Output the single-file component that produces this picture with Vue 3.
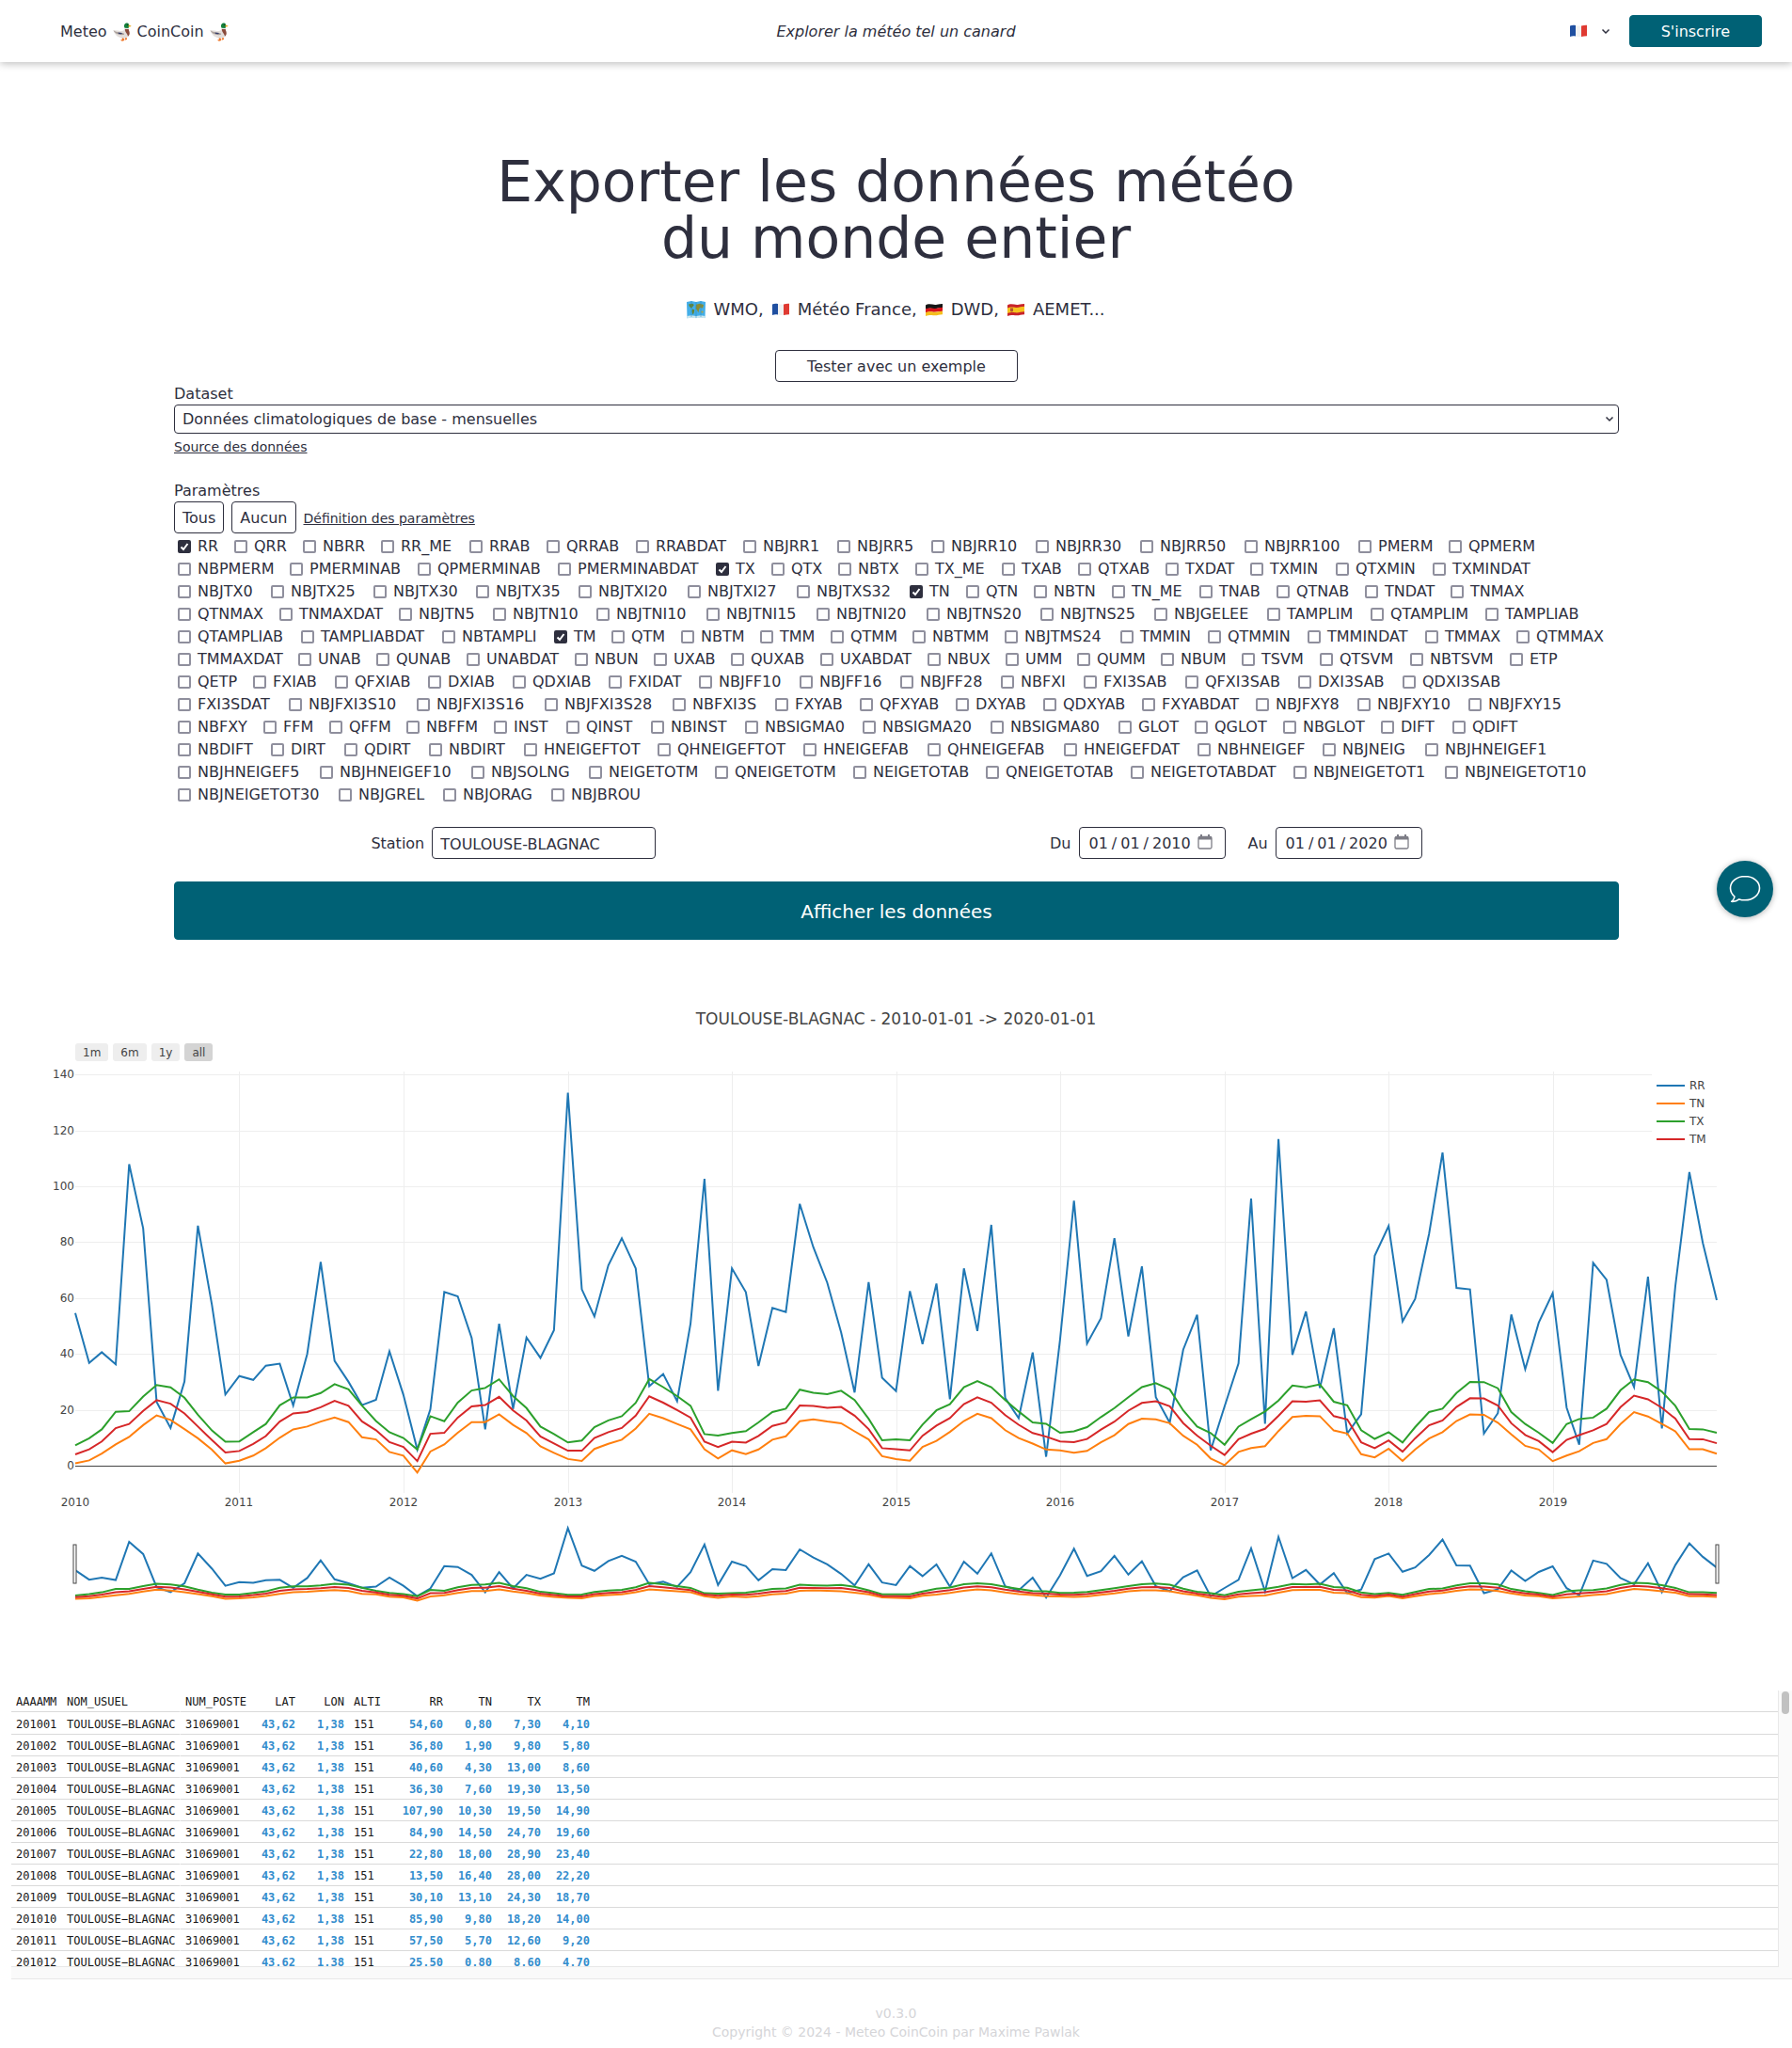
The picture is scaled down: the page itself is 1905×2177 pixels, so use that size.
<script setup>
import { ref, computed } from 'vue'

const PARAM_NAMES = `RR QRR NBRR RR_ME RRAB QRRAB RRABDAT NBJRR1 NBJRR5 NBJRR10 NBJRR30 NBJRR50 NBJRR100 PMERM QPMERM
NBPMERM PMERMINAB QPMERMINAB PMERMINABDAT TX QTX NBTX TX_ME TXAB QTXAB TXDAT TXMIN QTXMIN TXMINDAT
NBJTX0 NBJTX25 NBJTX30 NBJTX35 NBJTXI20 NBJTXI27 NBJTXS32 TN QTN NBTN TN_ME TNAB QTNAB TNDAT TNMAX
QTNMAX TNMAXDAT NBJTN5 NBJTN10 NBJTNI10 NBJTNI15 NBJTNI20 NBJTNS20 NBJTNS25 NBJGELEE TAMPLIM QTAMPLIM TAMPLIAB
QTAMPLIAB TAMPLIABDAT NBTAMPLI TM QTM NBTM TMM QTMM NBTMM NBJTMS24 TMMIN QTMMIN TMMINDAT TMMAX QTMMAX
TMMAXDAT UNAB QUNAB UNABDAT NBUN UXAB QUXAB UXABDAT NBUX UMM QUMM NBUM TSVM QTSVM NBTSVM ETP
QETP FXIAB QFXIAB DXIAB QDXIAB FXIDAT NBJFF10 NBJFF16 NBJFF28 NBFXI FXI3SAB QFXI3SAB DXI3SAB QDXI3SAB
FXI3SDAT NBJFXI3S10 NBJFXI3S16 NBJFXI3S28 NBFXI3S FXYAB QFXYAB DXYAB QDXYAB FXYABDAT NBJFXY8 NBJFXY10 NBJFXY15
NBFXY FFM QFFM NBFFM INST QINST NBINST NBSIGMA0 NBSIGMA20 NBSIGMA80 GLOT QGLOT NBGLOT DIFT QDIFT
NBDIFT DIRT QDIRT NBDIRT HNEIGEFTOT QHNEIGEFTOT HNEIGEFAB QHNEIGEFAB HNEIGEFDAT NBHNEIGEF NBJNEIG NBJHNEIGEF1
NBJHNEIGEF5 NBJHNEIGEF10 NBJSOLNG NEIGETOTM QNEIGETOTM NEIGETOTAB QNEIGETOTAB NEIGETOTABDAT NBJNEIGETOT1 NBJNEIGETOT10
NBJNEIGETOT30 NBJGREL NBJORAG NBJBROU`.split(/\s+/)

// Advance of each capital in thousandths of an em, used to reserve the label widths
const ADVANCE = {
  A: 684, B: 686, C: 698, D: 771, E: 632, F: 575, G: 775, H: 751, I: 421, J: 455, K: 693, L: 557, M: 843,
  N: 748, O: 787, P: 603, Q: 787, R: 695, S: 684, T: 616, U: 732, V: 684, W: 989, X: 685, Y: 615, Z: 685
}
const KERNING = { TA: -85, AT: -85, TO: -20, OT: -20 }
const labelWidth = (name) => {
  const em = [...name].reduce(
    (sum, c, i) => sum + (ADVANCE[c] || 636) + (KERNING[name.slice(i, i + 2)] || 0), 0)
  return Math.round(em * 16 / 1000 - 0.2)
}

const params = PARAM_NAMES.map((name) => ({ name, width: labelWidth(name) }))
const selected = ref(['RR', 'TX', 'TN', 'TM'])
const selectAll = () => { selected.value = [...PARAM_NAMES] }
const selectNone = () => { selected.value = [] }

const dataset = ref('mensuelles')
const language = ref('fr')
const station = ref('TOULOUSE-BLAGNAC')
const from = ref('2010-01-01')
const to = ref('2020-01-01')

// Monthly series, 2010-01 to 2020-01
const RR = [
  54.6, 36.8, 40.6, 36.3, 107.9, 84.9, 22.8, 13.5, 30.1, 85.9, 57.5, 25.5,
  32.1, 30.7, 35.8, 36.5, 21.5, 40, 72.9, 37.5, 30, 21.7, 23.6, 40.9,
  25.4, 5.8, 20.2, 62.2, 60.6, 45.7, 13, 50.8, 20.3, 45.9, 38.6, 48.5,
  133.5, 63.1, 53.4, 71.7, 81.4, 70.6, 28.5, 32.8, 23.1, 50.9, 102.7, 26.8,
  70.6, 62.1, 35.7, 56.5, 55, 93.7, 78.2, 65.5, 47.6, 26.2, 65.7, 31.5,
  26.7, 62.5, 43.5, 65.2, 23.8, 70.6, 48.2, 86.2, 24.2, 17, 40.5, 3.2,
  45.1, 94.8, 43.7, 52.8, 81.4, 46.3, 71.3, 24.5, 15.4, 41.5, 54, 5.5,
  21.2, 36.6, 95.6, 15, 116.9, 39.7, 55.2, 27.8, 49.2, 11.5, 18.4, 75.2,
  85.8, 51.6, 59.7, 83, 112.1, 63.6, 63.1, 11.5, 18.8, 54.1, 34.5, 51.2,
  61.8, 20.8, 7.5, 72.6, 66.5, 39.7, 28.1, 67.6, 13.3, 64.3, 105.1, 79.7,
  59.3
]
const TX = [
  7.3, 9.8, 13, 19.3, 19.5, 24.7, 28.9, 28, 24.3, 18.2, 12.6, 8.6,
  8.7, 12, 14.9, 21.6, 24.4, 24.4, 26, 29.2, 27.3, 21.5, 16, 12,
  9.9, 5.8, 17.7, 15.9, 22.6, 26.9, 27.8, 30.9, 24.9, 20.6, 14, 11.3,
  8.3, 9, 13.8, 16.2, 17.7, 22.5, 31, 28.1, 24.9, 21.4, 11.3, 10.8,
  11.7, 12.4, 15.5, 19.2, 20.4, 27.2, 26.1, 25.6, 26.8, 23.5, 16.8, 9.1,
  9.4, 9.1, 14.7, 19.8, 22, 28.1, 30.3, 28.1, 23.5, 19.4, 15.5, 15,
  11.8, 12.3, 13.8, 17.4, 20.6, 24.5, 28.1, 29.5, 27.3, 19.8, 14, 11.7,
  7.5, 14, 16.6, 19.4, 23.3, 28.7, 28, 29.1, 22.9, 21.6, 12.7, 9.6,
  12, 8.3, 13.8, 19.2, 20.4, 26, 30, 29.9, 27.7, 19.2, 14.9, 11.8,
  8.1, 14.9, 16.7, 17.2, 20.4, 27, 30.9, 29.9, 26.5, 21.4, 13.1, 13,
  11.8
]
const TN = [
  0.8, 1.9, 4.3, 7.6, 10.3, 14.5, 18, 16.4, 13.1, 9.8, 5.7, 0.8,
  1.8, 3.6, 6.3, 10, 13, 14, 15.8, 17.2, 15.6, 10.2, 9.4, 4.9,
  3.6, -2.5, 5.1, 7.6, 11.8, 15.6, 15.6, 18.4, 14.6, 11.7, 6.9, 4.6,
  2.4, 1.7, 6, 7.8, 9.3, 13.3, 18.6, 17, 14.9, 13, 5.9, 2.6,
  5.5, 4.1, 5.8, 9.3, 10.5, 15.9, 16.6, 15.8, 15.2, 12.3, 9.4, 3.4,
  2.4, 1.8, 6.7, 8.9, 12.1, 16, 18.6, 17, 12.7, 9.9, 7.9, 5.8,
  5.5, 4.6, 5.3, 8.4, 10.9, 14.9, 16.8, 16.6, 15.2, 10.7, 7.5, 2.6,
  0.2, 4.9, 6.3, 7, 12.4, 17.4, 17.8, 17.7, 12.6, 11.5, 4.1, 3,
  6.1, 1.7, 5.8, 9.7, 12, 16, 18.3, 18.2, 15.4, 11.2, 7.1, 5.8,
  1.6, 3.6, 5.2, 8.1, 9.5, 14.9, 19.2, 17.6, 14.9, 12.3, 5.9, 5.9,
  4.3
]
const TM = TN.map((v, i) => (v + TX[i]) / 2)

const series = [
  { name: 'RR', color: '#1f77b4', values: RR },
  { name: 'TN', color: '#ff7f0e', values: TN },
  { name: 'TX', color: '#2ca02c', values: TX },
  { name: 'TM', color: '#d62728', values: TM }
]

const START = Date.UTC(2010, 0, 1)
const END = Date.UTC(2020, 0, 1)
const xOf = (t) => 80 + (1745 * (t - START)) / (END - START)
const monthX = (i) => xOf(Date.UTC(2010, i, 1))
const yOf = (v) => 428 - v * 2.97
const miniY = (v) => 570 - v * 0.566
const points = (values, y) => values.map((v, i) => `${monthX(i).toFixed(1)},${y(v).toFixed(1)}`).join(' ')

const lines = computed(() => series.map((s) => ({ ...s, main: points(s.values, yOf), mini: points(s.values, miniY) })))
const years = Array.from({ length: 10 }, (_, i) => ({ year: 2010 + i, x: Math.round(xOf(Date.UTC(2010 + i, 0, 1))) }))
const yTicks = [0, 20, 40, 60, 80, 100, 120, 140].map((value) => ({ value, y: Math.round(yOf(value)) }))

const ranges = ['1m', '6m', '1y', 'all']
const range = ref('all')

const columns = [
  { name: 'AAAAMM' }, { name: 'NOM_USUEL' }, { name: 'NUM_POSTE' }, { name: 'LAT', num: true }, { name: 'LON', num: true },
  { name: 'ALTI' }, { name: 'RR', num: true }, { name: 'TN', num: true }, { name: 'TX', num: true }, { name: 'TM', num: true }
]
const meanTemps = [4.1, 5.8, 8.6, 13.5, 14.9, 19.6, 23.4, 22.2, 18.7, 14, 9.2, 4.7]
const fmt = (v) => v.toFixed(2).replace('.', ',')
const rows = meanTemps.map((tm, i) => [
  String(201001 + i), 'TOULOUSE−BLAGNAC', '31069001', '43,62', '1,38', '151', fmt(RR[i]), fmt(TN[i]), fmt(TX[i]), fmt(tm)
])
</script>

<template>
  <div class="page">
    <svg width="0" height="0" class="defs" aria-hidden="true">
      <symbol id="duck" viewBox="0 0 20 20">
        <path d="M9.500 15.500l.4 2.400-2 .9 2.100 1 2.200-.9-.9-3.400zM13 15.500l.2 1.900-1.200.7 1.600.5 1.500-.8-.8-2.300z" fill="#ee7424" />
        <path d="M.5 8.300C3 7.900 5.500 8.600 8 9c3 .3 4.600-.8 4.800-3.200l3.800.2c.1 2 1.200 3.400 1.100 5.600-.2 3-2.700 5-6.400 5C6.500 16.600 2 13.800.5 8.300z" fill="#e3dedb" />
        <path d="M12.800 6.700h3.900c.1 1.700 1.100 2.900 1 4.900-.1 1.500-.8 2.500-1.700 3.200-.2-3-3.200-4.300-3.200-8.100z" fill="#8a4a3b" />
        <path d="M.5 8.300c3 2 6 2.400 9.500 2.700 1.700.1 2.400.9 2 1.800-3 .9-9 .3-11.500-4.500z" fill="#a99f99" />
        <path d="M5.500 10.600l4.500.4-1 1.300-3-.4z" fill="#39406b" />
        <path d="M12.600 5.800l4.100.2v.8l-4.200-.2z" fill="#fff" />
        <path d="M12.600 5.700c-.7-1.200-.9-2.500-.3-3.700C12.900.7 14.100.2 15.300.5c1.400.3 2 1.300 1.900 2.600 0 1-.5 1.900-.6 2.800z" fill="#13803c" />
        <path d="M16.800 2.400c1 .4 2 .7 2.900 1.400-1 .7-2.100.7-3.200.4z" fill="#e8a81c" />
        <circle cx="15.400" cy="2.300" r=".5" fill="#111" />
      </symbol>
      <symbol id="flag-fr" viewBox="0 0 20 14">
        <path d="M1 1.500C3 .5 5 .5 7 1v11.500c-2-.4-4-.4-6 .6z" fill="#1f4fa0" />
        <path d="M7 1c2 .6 4 .8 6 .4v11.500c-2 .4-4 .1-6-.4z" fill="#f1f1f1" />
        <path d="M13 1.400c2-.3 4-.9 6-.6v11.500c-2 0-4 .3-6 .6z" fill="#df3a32" />
      </symbol>
      <symbol id="flag-de" viewBox="0 0 20 14">
        <path d="M1 2.500C5-.2 9 2.800 13 1.800c2-.4 4-.9 6-.9v4c-4 0-7 1.800-11 1-3-.5-5-.2-7 .8z" fill="#161616" />
        <path d="M1 6.500c3-1.500 5-1.200 8-.7 4 .7 6-1 10-1v4c-4 0-7 1.500-11 .8-3-.5-5 0-7 .8z" fill="#d8141a" />
        <path d="M1 10.300c3-1.300 5-1 8-.6 4 .5 6-1 10-1v3.500c-4 0-6 1.700-10 1-3-.5-5-.2-8 .8z" fill="#f5bf1e" />
      </symbol>
      <symbol id="flag-es" viewBox="0 0 20 14">
        <path d="M1 2.500C5-.2 9 2.800 13 1.800c2-.4 4-.9 6-.9v11.300c-4 0-6 1.700-10 1-3-.5-5-.2-8 .8z" fill="#c8232a" />
        <path d="M1 5.500c3-1.500 5-1.200 8-.7 4 .7 6-1 10-1v5.500c-4 0-6 1.600-10 1-3-.5-5-.2-8 .8z" fill="#f6c21d" />
        <path d="M4 5.500h3v3.300q-1.500 1.200-3 0z" fill="#b4552c" />
      </symbol>
      <symbol id="world-map" viewBox="0 0 20 19">
        <path d="M0 1l5-1 5 1 5-1 5 1-.5 17-4.500-.8-5 .9-5-.8-4.500.9z" fill="#43aee8" />
        <path d="M.2 16l4.800-.8 5 .8 5-.8 4.700.8-.2 2.200-4.500-.8-5 .9-5-.8-4.500.9z" fill="#cfe8ee" />
        <path d="M2 3.500l4-.7 1.800 1.200L6 6.500 5 7.800 3 6zM6 8.500l2.300 1L7.500 13l-1 1.500L5.500 11z" fill="#65842f" />
        <path d="M10 3.800l4-1 4 1.200-1 3.500-3-.5-1 2.500-.6 3-1.400-3L9.600 8z" fill="#8c8c32" />
        <path d="M15.500 10.500l2.200.2-.5 2-2-.4z" fill="#b1a340" />
        <path d="M5 0v17M10 1v17M15 0v17" stroke="#2b87bd" stroke-width=".5" fill="none" />
      </symbol>
    </svg>

    <header class="topbar">
      <a class="brand" href="#">Meteo
        <svg class="duck"><use href="#duck" /></svg>
        CoinCoin
        <svg class="duck"><use href="#duck" /></svg>
      </a>
      <em class="tagline">Explorer la météo tel un canard</em>
      <div class="actions">
        <div class="lang">
          <svg class="flag"><use href="#flag-fr" /></svg>
          <select v-model="language" class="chevron" aria-label="Langue"><option value="fr"></option></select>
        </div>
        <button class="btn primary">S'inscrire</button>
      </div>
    </header>

    <main>
      <h1>Exporter les données météo<br>du monde entier</h1>
      <p class="sources">
        <svg class="map"><use href="#world-map" /></svg> WMO,
        <svg class="flag"><use href="#flag-fr" /></svg> Météo France,
        <svg class="flag"><use href="#flag-de" /></svg> DWD,
        <svg class="flag"><use href="#flag-es" /></svg> AEMET...
      </p>

      <form class="form" @submit.prevent>
        <button type="button" class="btn example">Tester avec un exemple</button>
        <label for="dataset" class="caption">Dataset</label>
        <select id="dataset" v-model="dataset" class="field chevron">
          <option value="mensuelles">Données climatologiques de base - mensuelles</option>
        </select>
        <div class="source-link"><a href="#">Source des données</a></div>

        <span id="params-title" class="caption">Paramètres</span>
        <div class="tools">
          <button type="button" class="btn small" @click="selectAll">Tous</button>
          <button type="button" class="btn small" @click="selectNone">Aucun</button>
          <a href="#">Définition des paramètres</a>
        </div>
        <div class="params" role="group" aria-labelledby="params-title">
          <label v-for="p in params" :key="p.name" class="param">
            <input v-model="selected" type="checkbox" :value="p.name">
            <span :style="{ width: p.width + 'px' }">{{ p.name }}</span>
          </label>
        </div>

        <div class="filters">
          <div class="group">
            <label for="station">Station</label>
            <input id="station" v-model="station" class="field station" type="text">
          </div>
          <div class="group">
            <label for="from">Du</label>
            <input id="from" v-model="from" class="field date" type="date">
            <label for="to" class="until">Au</label>
            <input id="to" v-model="to" class="field date" type="date">
          </div>
        </div>
        <button type="submit" class="btn primary submit">Afficher les données</button>
      </form>

      <section class="chart">
        <h2>TOULOUSE-BLAGNAC - 2010-01-01 -&gt; 2020-01-01</h2>
        <div class="ranges">
          <button v-for="r in ranges" :key="r" :class="{ active: r === range }" @click="range = r">{{ r }}</button>
        </div>
        <svg class="plot" viewBox="0 0 1905 667" role="img" aria-label="RR, TN, TX, TM">
          <g class="grid">
            <line v-for="t in yTicks.slice(1)" :key="t.value" x1="80" x2="1825" :y1="t.y" :y2="t.y" />
            <line v-for="t in years.slice(1)" :key="t.year" :x1="t.x" :x2="t.x" y1="9" y2="457" />
          </g>
          <line class="zero" x1="80" x2="1825" y1="428" y2="428" />
          <g class="ticks">
            <text v-for="t in yTicks" :key="t.value" x="79" :y="t.y + 4" text-anchor="end">{{ t.value }}</text>
            <text v-for="t in years" :key="t.year" :x="t.x" y="471" text-anchor="middle">{{ t.year }}</text>
          </g>
          <polyline v-for="s in lines" :key="s.name" class="line" :points="s.main" :stroke="s.color" />
          <rect x="1756" y="10" width="69" height="82" fill="#fff" />
          <g v-for="(s, i) in lines" :key="s.name" class="ticks">
            <line class="line" x1="1761" x2="1791" :y1="24 + 19 * i" :y2="24 + 19 * i" :stroke="s.color" />
            <text x="1796" :y="28 + 19 * i">{{ s.name }}</text>
          </g>
          <polyline v-for="s in lines" :key="s.name" class="line" :points="s.mini" :stroke="s.color" />
          <rect class="handle" x="78" y="512" width="3" height="41" />
          <rect class="handle" x="1824" y="512" width="3" height="41" />
        </svg>
      </section>

      <section class="viewer">
        <div class="rows">
          <table>
            <colgroup>
              <col v-for="c in columns" :key="c.name" :class="'c-' + c.name"><col>
            </colgroup>
            <thead>
              <tr>
                <th v-for="c in columns" :key="c.name" :class="{ num: c.num }">{{ c.name }}</th><th></th>
              </tr>
            </thead>
            <tbody>
              <tr v-for="row in rows" :key="row[0]">
                <td v-for="(cell, i) in row" :key="i" :class="{ num: columns[i].num }">{{ cell }}</td><td></td>
              </tr>
            </tbody>
          </table>
        </div>
        <div class="track"><div class="thumb"></div></div>
      </section>
    </main>

    <footer>
      <div>v0.3.0</div>
      <div>Copyright © 2024 - Meteo CoinCoin par Maxime Pawlak</div>
    </footer>

    <button class="chat" aria-label="Contact">
      <svg viewBox="0 0 34 30" width="34" height="30">
        <path d="M17 1.500C8.400 1.500 1.500 7 1.500 14c0 3.600 1.700 6.700 4.500 9-.3 2-1.400 3.900-3.300 5.300 3.200.2 6.100-.7 8.100-2.400 1.900.6 4 .9 6.200.9 8.600 0 15.500-5.600 15.500-12.800S25.600 1.500 17 1.500z" fill="none" stroke="#fff" stroke-width="1.600" stroke-linejoin="round" />
      </svg>
    </button>
  </div>
</template>

<style>
body {
  margin: 0;
  background: #fff;
}
</style>

<style scoped>
.page {
  position: relative;
  color: #2e2f3e;
  font: 16px/24px Verdana, "DejaVu Sans", sans-serif;
}
.defs {
  position: absolute;
}
a {
  color: inherit;
}
button,
input,
select {
  font: inherit;
  color: inherit;
  box-sizing: border-box;
  margin: 0;
}
button {
  cursor: pointer;
}

.topbar {
  display: grid;
  grid-template-columns: 1fr auto 1fr;
  align-items: center;
  height: 66px;
  padding: 0 32px 0 64px;
  box-shadow: 0 2px 8px rgba(0, 0, 0, 0.25);
}
.brand {
  display: flex;
  align-items: center;
  gap: 6px;
  padding-top: 2px;
  text-decoration: none;
}
.duck {
  width: 20px;
  height: 20px;
}
.tagline {
  margin-left: -32px;
  padding-top: 2px;
}
.actions {
  display: flex;
  justify-content: flex-end;
  align-items: center;
  gap: 16px;
}
.lang {
  display: flex;
  align-items: center;
}
.flag {
  width: 20px;
  height: 14px;
}
.chevron {
  appearance: none;
  background: url("data:image/svg+xml,%3Csvg xmlns='http://www.w3.org/2000/svg' width='10' height='7'%3E%3Cpath d='M1.500 1.500l3.500 3.500 3.500-3.500' fill='none' stroke='%232e2f3e' stroke-width='1.500'/%3E%3C/svg%3E") no-repeat right 4px center;
}
.lang select {
  width: 28px;
  height: 24px;
  border: 0;
}

.btn {
  height: 34px;
  padding: 2px 33px 0;
  border: 1px solid #2e2f3e;
  border-radius: 4px;
  background: #fff;
}
.btn.primary {
  border-color: #006175;
  background: #006175;
  color: #fff;
}
.btn.small {
  padding: 2px 8px 0;
}

h1 {
  margin: 97px 0 30px;
  font-size: 60px;
  line-height: 60px;
  font-weight: 400;
  text-align: center;
}
.sources {
  display: flex;
  justify-content: center;
  align-items: center;
  gap: 8px;
  margin: 0 0 29px;
  padding-top: 2px;
  font-size: 18px;
  line-height: 28px;
}
.map {
  width: 20px;
  height: 19px;
}

.form {
  display: flex;
  flex-direction: column;
  margin: 0 184px 0 185px;
}
.example {
  align-self: center;
}
.caption {
  padding-top: 2px;
  line-height: 22px;
}
.field {
  border: 1px solid #2e2f3e;
  border-radius: 4px;
  background-color: #fff;
  padding: 0 8px;
}
select.field {
  height: 31px;
}
.source-link {
  margin: 3px 0 23px;
  font-size: 14px;
  line-height: 22px;
}
.tools {
  display: flex;
  align-items: center;
  gap: 8px;
  margin-bottom: 2px;
}
.tools a {
  padding-top: 2px;
  font-size: 14px;
}
.params {
  display: flex;
  flex-wrap: wrap;
  column-gap: 5px;
}
.param {
  display: flex;
  align-items: center;
  gap: 7px;
  margin: 0 8px 0 4px;
}
.param span {
  white-space: nowrap;
}
.param input {
  appearance: none;
  width: 14px;
  height: 14px;
  border: 2px solid #8f8f9d;
  border-radius: 2px;
  background: #fff;
}
.param input:checked {
  border-color: #2e2f3e;
  background: #2e2f3e url("data:image/svg+xml,%3Csvg xmlns='http://www.w3.org/2000/svg' width='10' height='10'%3E%3Cpath d='M1.500 5.500l2.500 2.500 4.500-6' fill='none' stroke='white' stroke-width='2'/%3E%3C/svg%3E") no-repeat center;
}

.filters {
  display: flex;
  justify-content: space-around;
  margin: 22px 0 24px;
}
.group {
  display: flex;
  align-items: center;
  gap: 8px;
}
.group label {
  padding-top: 2px;
}
.group .field {
  height: 34px;
  padding-top: 2px;
}
.station {
  width: 238px;
}
.date {
  width: 156px;
  padding: 0 13px 0 9px;
}
.date::-webkit-datetime-edit-text {
  padding: 0 3px;
}
.date::-webkit-calendar-picker-indicator {
  width: 16px;
  height: 16px;
  margin: 0 0 4px;
  padding: 0;
  background: url("data:image/svg+xml,%3Csvg xmlns='http://www.w3.org/2000/svg' width='16' height='16'%3E%3Cpath d='M4 0v3M12 0v3' stroke='%237d7d86' stroke-width='2'/%3E%3Crect x='1' y='2.500' width='14' height='12.500' rx='1.500' fill='none' stroke='%237d7d86' stroke-width='1.300'/%3E%3Cpath d='M1 2.500h14v3H1z' fill='%237d7d86'/%3E%3C/svg%3E") no-repeat center;
}
.until {
  margin-left: 16px;
}
.submit {
  height: 62px;
  font-size: 20px;
}

.chart {
  margin-top: 72px;
  color: #444;
}
.chart h2 {
  margin: 0 0 14px;
  font-size: 17px;
  font-weight: 400;
  text-align: center;
}
.ranges {
  display: flex;
  gap: 5px;
  padding-left: 80px;
}
.ranges button {
  height: 19px;
  padding: 0 8px;
  border: 0;
  border-radius: 3px;
  background: #eee;
  font-size: 12px;
  line-height: 18px;
}
.ranges .active {
  background: #d4d4d4;
}
.plot {
  display: block;
  width: 100%;
  margin-top: 2px;
}
.grid line {
  stroke: #eee;
  shape-rendering: crispEdges;
}
.zero {
  stroke: #444;
  shape-rendering: crispEdges;
}
.ticks text {
  fill: #444;
  font-size: 12px;
}
.line {
  fill: none;
  stroke-width: 2px;
}
.handle {
  fill: #fff;
  stroke: #444;
}

.viewer {
  display: flex;
  height: 294px;
  margin-left: 12px;
  padding-bottom: 12px;
  background: #fafafa;
  border-bottom: 1px solid #e8e8e8;
}
.rows {
  flex: 1;
  overflow: hidden;
  background: #fff;
  border: solid #e8e8e8;
  border-width: 0 1px 1px 0;
}
table {
  width: 100%;
  table-layout: fixed;
  border-collapse: separate;
  border-spacing: 0;
  color: #161616;
  font: 12px/20px Menlo, "DejaVu Sans Mono", monospace;
}
th,
td {
  height: 20px;
  padding: 2px 5px 0;
  border-bottom: 1px solid #dadada;
  font-weight: 400;
  text-align: left;
  white-space: nowrap;
}
tbody tr:first-child td {
  padding-top: 3px;
}
th:nth-child(2),
td:nth-child(2) {
  border-right: 1px solid #fff;
}
th.num,
td.num {
  text-align: right;
}
td.num {
  color: #338dcd;
  font-weight: 700;
}
.c-AAAAMM { width: 54px; }
.c-NOM_USUEL { width: 126px; }
.c-NUM_POSTE { width: 75px; }
.c-LAT,
.c-LON,
.c-TN,
.c-TX,
.c-TM { width: 52px; }
.c-ALTI { width: 42px; }
.c-RR { width: 63px; }
.track {
  width: 14px;
}
.thumb {
  width: 8px;
  height: 24px;
  margin: 1px 3px;
  border-radius: 4px;
  background: #c1c1c1;
}

footer {
  padding: 26px 0 7px;
  color: #d5d5d8;
  font-size: 14px;
  line-height: 20px;
  text-align: center;
}

.chat {
  position: absolute;
  top: 915px;
  right: 20px;
  display: grid;
  place-items: center;
  width: 60px;
  height: 60px;
  padding: 0;
  border: 0;
  border-radius: 50%;
  background: #006175;
  box-shadow: 0 1px 6px rgba(0, 0, 0, 0.3);
}
</style>
